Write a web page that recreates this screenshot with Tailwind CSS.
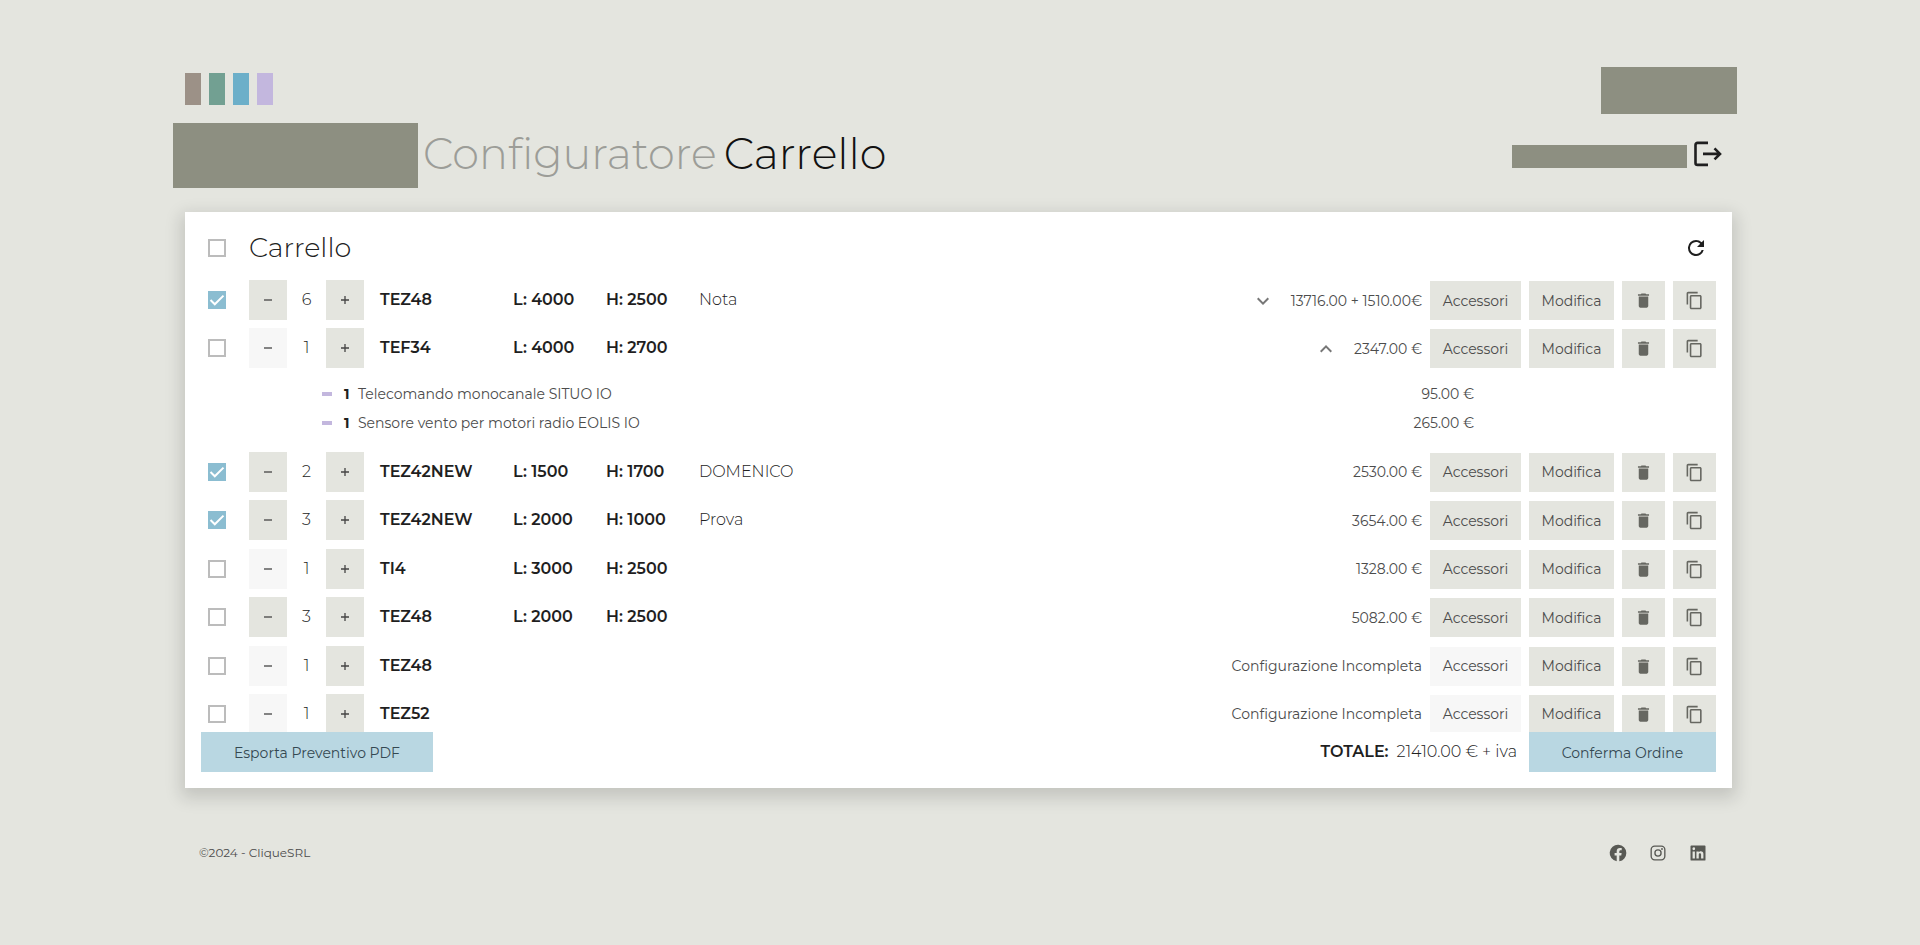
<!DOCTYPE html>
<html lang="it">
<head>
<meta charset="utf-8">
<meta name="viewport" content="width=device-width, initial-scale=1">
<title>Configuratore - Carrello</title>
<script src="https://cdn.jsdelivr.net/npm/@tailwindcss/browser@4"></script>
</head>
<body class="min-h-screen bg-[#e4e5df] pt-[67px] pr-[188px] pl-[185px] font-[Montserrat,Inter,sans-serif] font-normal text-[#4c4c4c]">

<svg class="hidden" aria-hidden="true">
  <symbol id="trash" viewBox="0 0 24 24"><path d="M6 19c0 1.100.9 2 2 2h8c1.100 0 2-.9 2-2V7H6v12zM19 4h-3.500l-1-1h-5l-1 1H5v2h14V4z"/></symbol>
  <symbol id="copy" viewBox="0 0 24 24"><path d="M16 1H4c-1.100 0-2 .9-2 2v14h2V3h12V1zm3 4H8c-1.100 0-2 .9-2 2v14c0 1.100.9 2 2 2h11c1.100 0 2-.9 2-2V7c0-1.100-.9-2-2-2zm0 16H8V7h11v14z"/></symbol>
  <symbol id="down" viewBox="0 0 24 24"><path d="M7.410 8.590 12 13.170l4.590-4.580L18 10l-6 6-6-6z"/></symbol>
  <symbol id="up" viewBox="0 0 24 24"><path d="M7.410 15.410 12 10.830l4.590 4.580L18 14l-6-6-6 6z"/></symbol>
</svg>

<header>
  <div class="flex items-start justify-between">
    <div class="flex gap-2 pt-[6px]">
      <span class="h-8 w-4 bg-[#9c9187]"></span>
      <span class="h-8 w-4 bg-[#72a092]"></span>
      <span class="h-8 w-4 bg-[#6cafc9]"></span>
      <span class="h-8 w-4 bg-[#c3b7de]"></span>
    </div>
    <div class="-mr-[5px] h-[47px] w-[136px] bg-[#8d8f81]"></div>
  </div>
  <div class="mt-[9px] flex items-start justify-between">
    <div class="-ml-3 flex items-start">
      <div class="h-[65px] w-[245px] bg-[#8d8f81]"></div>
      <h1 class="ml-[5px] flex gap-[7px] text-[43px] leading-[62px] font-light">
        <a href="#" class="text-[#9c9d98]">Configuratore</a>
        <span class="text-[#111]">Carrello</span>
      </h1>
    </div>
    <div class="mr-[10px] flex items-center gap-[3px] pt-[15px]">
      <div class="mt-[5px] h-[23px] w-[175px] bg-[#8d8f81]"></div>
      <button type="button" aria-label="Esci" class="size-8">
        <svg viewBox="0 0 32 32" class="size-8" fill="none" stroke="#1f1f1f" stroke-width="2.600"><path d="M18 4.900H7.500a2 2 0 0 0-2 2v18a2 2 0 0 0 2 2H18M13 15.900h17M24.500 10.400l5.500 5.500-5.500 5.500"/></svg>
      </button>
    </div>
  </div>
</header>

<main class="mt-6 bg-white px-4 pb-4 shadow-[0_6px_16px_4px_rgba(0,0,0,0.14)]">
  <div class="flex h-[68px] items-center pt-1 pl-[7px]">
    <input type="checkbox" id="all" aria-label="Seleziona tutto" class="size-[18px] appearance-none border-2 border-[#bcbcbc]">
    <h2 class="ml-[23px] text-[27px] leading-8 font-light text-[#222]">Carrello</h2>
    <button type="button" aria-label="Aggiorna" class="mr-2 ml-auto size-6">
      <svg viewBox="0 0 24 24" class="size-6" fill="#1f1f1f"><path d="M17.650 6.350A7.960 7.960 0 0 0 12 4a8 8 0 1 0 7.730 10h-2.080A6 6 0 1 1 12 6c1.660 0 3.140.69 4.220 1.780L13 11h7V4z"/></svg>
    </button>
  </div>

  <div class="h-[452px] overflow-hidden">
    <ul id="rows" class="flex h-[454px] flex-col justify-between"></ul>
  </div>

  <div class="flex h-10 items-center">
    <button type="button" class="h-10 w-[232px] bg-[#b9d7e2] pt-0.5 text-sm font-normal text-[#344851]">Esporta Preventivo PDF</button>
    <p class="mr-3 ml-auto text-base leading-6 font-light text-[#222]"><strong class="mr-2 font-semibold text-[#1f1f1f]">TOTALE:</strong>21410.00 € + iva</p>
    <button type="button" class="h-10 w-[187px] bg-[#b9d7e2] pt-0.5 text-sm font-normal text-[#344851]">Conferma Ordine</button>
  </div>
</main>

<footer class="flex items-center justify-between pt-[55px] pr-6 pb-8 pl-[14px] text-xs">
  <p>©2024 - CliqueSRL</p>
  <nav class="flex gap-5 fill-[#585954]">
    <a href="#" aria-label="Facebook"><svg viewBox="0 0 24 24" class="size-5"><path d="M22 12a10 10 0 1 0-11.560 9.880v-6.990H7.900V12h2.540V9.800c0-2.510 1.490-3.890 3.780-3.890 1.090 0 2.240.2 2.240.2v2.460H15.200c-1.240 0-1.630.77-1.630 1.560V12h2.780l-.45 2.890h-2.330v6.990A10 10 0 0 0 22 12z"/></svg></a>
    <a href="#" aria-label="Instagram"><svg viewBox="0 0 24 24" class="size-5"><path fill-rule="evenodd" d="M8 3h8a5 5 0 0 1 5 5v8a5 5 0 0 1-5 5H8a5 5 0 0 1-5-5V8a5 5 0 0 1 5-5zm0 1.600A3.400 3.400 0 0 0 4.600 8v8A3.400 3.400 0 0 0 8 19.400h8a3.400 3.400 0 0 0 3.400-3.400V8A3.400 3.400 0 0 0 16 4.600zM12 7.500a4.500 4.500 0 1 1 0 9 4.500 4.500 0 0 1 0-9zm0 1.600a2.900 2.900 0 1 0 0 5.800 2.900 2.900 0 0 0 0-5.800zM16.800 6.100a1.100 1.100 0 1 1 0 2.200 1.100 1.100 0 0 1 0-2.200z"/></svg></a>
    <a href="#" aria-label="LinkedIn"><svg viewBox="0 0 24 24" class="size-5"><path d="M20 3a1 1 0 0 1 1 1v16a1 1 0 0 1-1 1H4a1 1 0 0 1-1-1V4a1 1 0 0 1 1-1zM18.500 18.500v-5.300a3.260 3.260 0 0 0-3.260-3.260c-.85 0-1.840.52-2.320 1.300v-1.110h-2.790v8.370h2.790v-4.930c0-.77.62-1.400 1.390-1.400a1.400 1.400 0 0 1 1.400 1.400v4.930h2.790M6.880 8.560a1.680 1.680 0 0 0 0-3.370 1.690 1.690 0 0 0 0 3.370m1.390 9.940v-8.370H5.500v8.370h2.770z" fill-rule="evenodd"/></svg></a>
  </nav>
</footer>

<script>
const items = [
  { on: true, qty: 6, code: 'TEZ48', l: 4000, h: 2500, note: 'Nota', price: '13716.00 + 1510.00€', arrow: 'down' },
  { qty: 1, code: 'TEF34', l: 4000, h: 2700, price: '2347.00 €', arrow: 'up', extras: [
    ['Telecomando monocanale SITUO IO', '95.00 €'],
    ['Sensore vento per motori radio EOLIS IO', '265.00 €'],
  ] },
  { on: true, qty: 2, code: 'TEZ42NEW', l: 1500, h: 1700, note: 'DOMENICO', price: '2530.00 €' },
  { on: true, qty: 3, code: 'TEZ42NEW', l: 2000, h: 1000, note: 'Prova', price: '3654.00 €' },
  { qty: 1, code: 'TI4', l: 3000, h: 2500, price: '1328.00 €' },
  { qty: 3, code: 'TEZ48', l: 2000, h: 2500, price: '5082.00 €' },
  { qty: 1, code: 'TEZ48', price: 'Configurazione Incompleta', open: true },
  { qty: 1, code: 'TEZ52', price: 'Configurazione Incompleta', open: true },
];
const btn = 'h-[39px] bg-[#e4e5df] disabled:bg-[#f7f7f7] text-sm font-normal';
const step = 'h-10 w-[38px] shrink-0 bg-[#e4e5df] disabled:bg-[#f7f7f7] grid place-items-center';
document.getElementById('rows').innerHTML = items.map(r => `
<li>
  <div class="flex h-10 items-center pl-[7px]">
    <span class="relative mr-[23px] size-[18px] shrink-0">
      <input type="checkbox" aria-label="Seleziona ${r.code}" ${r.on ? 'checked' : ''} class="block size-[18px] appearance-none border-2 border-[#bcbcbc] checked:border-0 checked:bg-[#8bbdd1]">
      ${r.on ? '<svg viewBox="0 0 18 18" class="pointer-events-none absolute inset-0 size-[18px]" fill="none" stroke="#fff" stroke-width="2"><path d="M2.500 9l4.300 4.300L15.500 4.600"/></svg>' : ''}
    </span>
    <button type="button" aria-label="Diminuisci" class="${step}" ${r.qty === 1 ? 'disabled' : ''}><svg viewBox="0 0 10 10" class="size-[10px]" stroke="#444" stroke-width="1.300"><path d="M1 5h8"/></svg></button>
    <span class="w-[39px] text-center text-base font-light text-[#222]">${r.qty}</span>
    <button type="button" aria-label="Aumenta" class="${step}"><svg viewBox="0 0 10 10" class="size-[10px]" stroke="#444" stroke-width="1.300"><path d="M1 5h8M5 1v8"/></svg></button>
    <span class="ml-4 flex text-base font-semibold text-[#1f1f1f]">
      <span class="w-[133px]">${r.code}</span>
      <span class="w-[93px]">${r.l ? 'L: ' + r.l : ''}</span>
      <span class="w-[93px]">${r.h ? 'H: ' + r.h : ''}</span>
    </span>
    <span class="text-base font-light text-[#222]">${r.note || ''}</span>
    <span class="ml-auto flex items-center gap-2 pt-px text-sm">
      ${r.arrow ? `<button type="button" aria-label="Accessori inclusi" class="mr-2"><svg viewBox="0 0 24 24" class="size-6" fill="#777"><use href="#${r.arrow}"/></svg></button>` : ''}
      <span>${r.price}</span>
      <button type="button" class="${btn} w-[91px]" ${r.open ? 'disabled' : ''}>Accessori</button>
      <button type="button" class="${btn} w-[85px]">Modifica</button>
      <button type="button" aria-label="Elimina" class="${btn} grid w-[43px] place-items-center"><svg viewBox="0 0 24 24" class="size-[19px]" fill="#666761"><use href="#trash"/></svg></button>
      <button type="button" aria-label="Duplica" class="${btn} grid w-[43px] place-items-center"><svg viewBox="0 0 24 24" class="size-[19px]" fill="#666761"><use href="#copy"/></svg></button>
    </span>
  </div>
  ${r.extras ? `<ul class="pt-[11px] pb-[6px] text-sm">${r.extras.map(e => `
    <li class="flex h-[29px] items-center pr-[242px] pl-[121px]">
      <span class="h-1 w-[10px] bg-[#c3b7de]"></span>
      <b class="ml-3 w-[14px] font-bold text-[#1f1f1f]">1</b>
      <span>${e[0]}</span><span class="ml-auto">${e[1]}</span>
    </li>`).join('')}</ul>` : ''}
</li>`).join('');
</script>
</body>
</html>
